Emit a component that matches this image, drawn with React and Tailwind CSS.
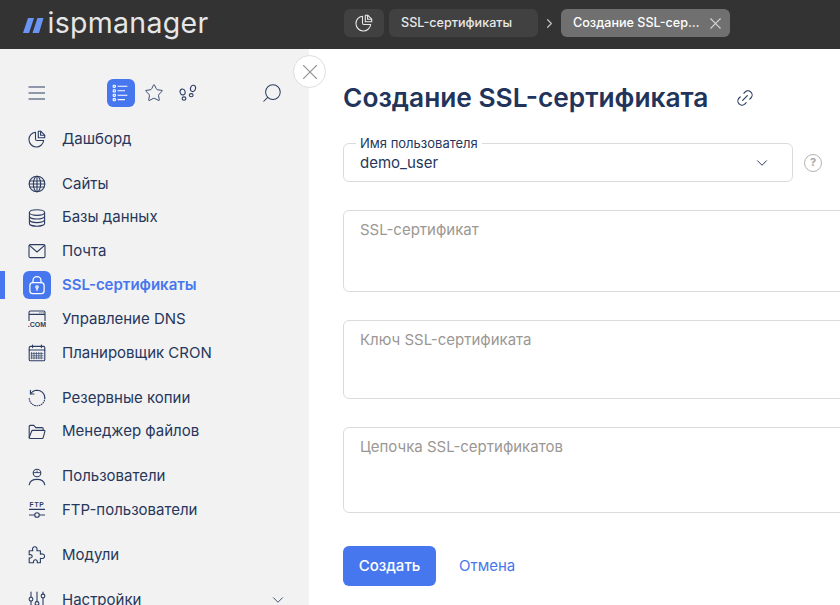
import React from 'react';
import { ChevronDown, ChevronRight, X, Search, Star, Link2 } from 'lucide-react';

const Ico = ({ children, className = 'w-[18px] h-[18px]' }) => (
  <svg viewBox="0 0 18 18" fill="none" stroke="currentColor" strokeWidth="1.1" strokeLinecap="round" strokeLinejoin="round" className={className}>
    {children}
  </svg>
);

const PieIcon = (props) => (
  <Ico {...props}>
    <path d="M7.5 2.2a7.4 7.4 0 1 0 8.2 8.3H8.9a1.4 1.4 0 0 1-1.4-1.4z" />
    <path d="M10.3 1.2h2.4l4 4v2.6h-6.4z" />
    <path d="M12.6 1.4v3.9h4" />
  </Ico>
);

const GlobeIcon = () => (
  <Ico>
    <circle cx="9" cy="9" r="7.8" />
    <ellipse cx="9" cy="9" rx="3.6" ry="7.8" />
    <path d="M9 1.2v15.6M1.9 6h14.2M1.9 12h14.2M1.2 9h15.6" />
  </Ico>
);

const DbIcon = () => (
  <Ico>
    <ellipse cx="9" cy="3.6" rx="7.6" ry="2.8" />
    <path d="M1.4 3.6v10.8c0 1.5 3.4 2.8 7.6 2.8s7.6-1.3 7.6-2.8V3.6" />
    <path d="M1.4 7.2c0 1.5 3.4 2.8 7.6 2.8s7.6-1.3 7.6-2.8M1.4 10.8c0 1.5 3.4 2.8 7.6 2.8s7.6-1.3 7.6-2.8" />
  </Ico>
);

const MailIcon = () => (
  <Ico>
    <rect x="1" y="2.6" width="16" height="13" rx="1.4" />
    <path d="M1.4 3.4 9 10l7.6-6.6" />
  </Ico>
);

const LockIcon = () => (
  <Ico className="w-[20px] h-[20px]">
    <rect x="2.6" y="6.8" width="12.8" height="10" rx="2.6" />
    <path d="M5.4 6.8V5a3.6 3.6 0 0 1 7.2 0v1.8" />
    <circle cx="9" cy="10.8" r="1.1" />
    <path d="M9 12v1.8" />
  </Ico>
);

const DnsIcon = () => (
  <svg viewBox="0 0 18 18" className="w-[18px] h-[18px]" fill="none" stroke="currentColor" strokeWidth="1.1">
    <path d="M1 11V2.4A1.4 1.4 0 0 1 2.4 1h13.2A1.4 1.4 0 0 1 17 2.4V11M1 4.4h16" />
    <path d="M11.5 2.8h.8M13.5 2.8h.8M15 2.8h.6" />
    <text x="9" y="17.4" textAnchor="middle" fontSize="7" fontWeight="700" fill="currentColor" stroke="none" fontFamily="Liberation Sans, sans-serif">.COM</text>
  </svg>
);

const CalIcon = () => (
  <Ico>
    <rect x="1.2" y="2.4" width="15.6" height="14.4" rx="1.4" />
    <path d="M1.2 6h15.6M4.6 1v2.6M13.4 1v2.6" />
    <path d="M3.6 8.4v6.4M6 8.4v6.4M8.4 8.4v6.4M10.8 8.4v6.4M13.2 8.4v6.4M3 9.6h12M3 11.8h12M3 14h12" strokeWidth="0.7" />
  </Ico>
);

const BackupIcon = () => (
  <Ico>
    <path d="M2.6 4.8A7.8 7.8 0 0 1 9 1.2a7.8 7.8 0 0 1 7.8 7.8" />
    <path d="M2.4 1.4v3.6H6" />
    <path d="M16.8 9A7.8 7.8 0 0 1 9 16.8 7.8 7.8 0 0 1 1.2 9" strokeDasharray="0.8 1.5" />
  </Ico>
);

const FolderIcon = () => (
  <Ico>
    <path d="M1.2 14.6V3.6a1.2 1.2 0 0 1 1.2-1.2h3.4l2 2.2h6.2A1.2 1.2 0 0 1 15.2 5.8V7.4" />
    <path d="M1.2 14.6 3.6 8.2a1.2 1.2 0 0 1 1.1-.8h11.4a.8.8 0 0 1 .8 1l-1.7 6.2a1.2 1.2 0 0 1-1.1.9H2.2a1 1 0 0 1-1-.9z" />
  </Ico>
);

const UserIcon = () => (
  <Ico>
    <circle cx="9" cy="5" r="3.8" />
    <path d="M5.4 4.6h7.2M9 4.6V3" strokeWidth="0.9" />
    <path d="M1.2 16.8c.6-3.4 3.8-5.4 7.8-5.4s7.2 2 7.8 5.4" />
  </Ico>
);

const FtpIcon = () => (
  <svg viewBox="0 0 18 18" className="w-[18px] h-[18px]" fill="none" stroke="currentColor" strokeWidth="1.1">
    <text x="9" y="5.6" textAnchor="middle" fontSize="6.6" fontWeight="700" letterSpacing="0.8" fill="currentColor" stroke="none" fontFamily="Liberation Sans, sans-serif">FTP</text>
    <path d="M1 8.4h16M1 14h5.6M11.4 14H17" />
    <circle cx="9" cy="14" r="2.3" />
  </svg>
);

const PuzzleIcon = () => (
  <Ico>
    <path d="M1.2 4.8h3.6c-.9-2.4.4-4 2-4s2.9 1.6 2 4h3.6v3.4c2.3-.9 4.2.3 4.2 2s-1.9 2.9-4.2 2v4.6H9.2c.6-2-.6-3-1.8-3s-2.4 1-1.8 3H1.2v-5c2 .6 3-.5 3-1.5s-1-2.1-3-1.5z" />
  </Ico>
);

const SlidersIcon = () => (
  <Ico>
    <path d="M3 1v5.4M3 10v7M9 1v9.6M9 14.4V17M15 1v2M15 7v10" />
    <circle cx="3" cy="8.2" r="1.9" />
    <circle cx="9" cy="12.5" r="1.9" />
    <circle cx="15" cy="5" r="1.9" />
  </Ico>
);

const ListIcon = () => (
  <svg viewBox="0 0 18 18" className="w-[18px] h-[18px]" fill="none" stroke="white" strokeWidth="1.1">
    <rect x="1.2" y="1.2" width="2.2" height="2.2" rx="0.6" />
    <rect x="1.2" y="5.8" width="2.2" height="2.2" rx="0.6" />
    <rect x="1.2" y="10.2" width="2.2" height="2.2" rx="0.6" />
    <rect x="1.2" y="14.6" width="2.2" height="2.2" rx="0.6" />
    <path d="M5.6 2.2h9.8M5.6 6.8h7.4M5.6 11.2h9.8M5.6 15.6h7.4" />
  </svg>
);

const StepsIcon = () => (
  <Ico>
    <ellipse cx="3.6" cy="8" rx="2.5" ry="3" transform="rotate(-15 3.6 8)" />
    <ellipse cx="5" cy="14.6" rx="1.9" ry="1.7" />
    <ellipse cx="14" cy="4.4" rx="2.5" ry="3.2" transform="rotate(15 14 4.4)" />
    <ellipse cx="12.2" cy="11.2" rx="1.9" ry="1.6" />
  </Ico>
);

const groups = [
  [{ label: 'Дашборд', icon: <PieIcon /> }],
  [
    { label: 'Сайты', icon: <GlobeIcon /> },
    { label: 'Базы данных', icon: <DbIcon /> },
    { label: 'Почта', icon: <MailIcon /> },
    { label: 'SSL-сертификаты', icon: <LockIcon />, active: true },
    { label: 'Управление DNS', icon: <DnsIcon /> },
    { label: 'Планировщик CRON', icon: <CalIcon /> },
  ],
  [
    { label: 'Резервные копии', icon: <BackupIcon /> },
    { label: 'Менеджер файлов', icon: <FolderIcon /> },
  ],
  [
    { label: 'Пользователи', icon: <UserIcon /> },
    { label: 'FTP-пользователи', icon: <FtpIcon /> },
  ],
  [{ label: 'Модули', icon: <PuzzleIcon /> }],
  [{ label: 'Настройки', icon: <SlidersIcon />, more: true }],
];

const NavRow = ({ item }) => (
  <div className="relative flex h-[33.8px] items-center pl-[23px] pr-[22px]">
    {item.active && <span className="absolute left-0 top-[3px] h-[28px] w-[5px] bg-[#4777ee]" />}
    <span className={`flex h-[28px] w-[28px] items-center justify-center rounded-[6px] ${item.active ? 'bg-[#4777ee] text-white' : 'text-[#2c3d63]'}`}>
      {item.icon}
    </span>
    <span className={`ml-[11px] text-[15px] ${item.active ? 'font-semibold text-[#4777ee]' : 'text-[#26375c]'}`}>{item.label}</span>
    {item.more && <ChevronDown className="ml-auto h-[18px] w-[18px] text-[#2c3d63]" strokeWidth={1.2} />}
  </div>
);

const TextField = ({ label, height, className = '' }) => (
  <div className={`w-[530px] rounded-[6px] border border-[#dbdbdb] px-[16px] pt-[8px] text-[15px] text-[#9b9793] ${height} ${className}`}>
    {label}
  </div>
);

export default function App() {
  return (
    <div className="flex h-[605px] w-[840px] flex-col overflow-hidden bg-white font-['Inter','Noto_Sans',sans-serif]">
      <header className="flex h-[49px] shrink-0 items-center bg-[#333333]">
        <div className="flex w-[344px] items-center pl-[23px]">
          <svg viewBox="0 0 20.5 15" className="mt-[1px] h-[15px] w-[20.5px]">
            <path d="M5 0h6L6 15H0zM14.5 0h6L16 15H9.5z" fill="#6b95f5" />
          </svg>
          <span className="ml-[4px] -mt-[2px] text-[28.5px] leading-none tracking-[0.3px] text-[#e6e6e6]">ispmanager</span>
        </div>
        <div className="-mt-[3px] flex items-center text-[12.6px]">
          <div className="flex h-[28px] w-[40px] items-center justify-center rounded-[6px] bg-[#414141] text-[#e8e8e8]">
            <PieIcon />
          </div>
          <div className="ml-[5px] flex h-[28px] w-[149px] items-center rounded-[6px] bg-[#414141] pl-[12px] font-medium text-[#e8e8e8]">SSL-сертификаты</div>
          <ChevronRight className="mx-[4px] h-[15px] w-[15px] text-[#bdbdbd]" strokeWidth={2} />
          <div className="flex h-[28px] w-[169px] items-center rounded-[6px] bg-[#707070] pl-[12px] pr-[5px] font-medium whitespace-nowrap text-white">
            Создание SSL-сер…
            <X className="ml-auto h-[19px] w-[19px] text-[#d2d2d2]" strokeWidth={1.4} />
          </div>
        </div>
      </header>

      <div className="relative flex min-h-0 flex-1">
        <aside className="flex w-[309px] shrink-0 flex-col overflow-hidden bg-[#f2f2f2]">
          <div className="mt-[30px] mb-[15px] flex h-[28px] items-center pl-[28px] pr-[26px] text-[#2c3d63]">
            <svg viewBox="0 0 18 18" className="h-[18px] w-[18px]" fill="none" stroke="currentColor" strokeWidth="1.1">
              <path d="M.5 3h16.5M.5 9h16.5M.5 15h16.5" />
            </svg>
            <div className="ml-[61px] flex h-[28px] w-[28px] items-center justify-center rounded-[6px] bg-[#4777ee]">
              <ListIcon />
            </div>
            <Star className="ml-[9px] h-[20px] w-[20px]" strokeWidth={1.1} />
            <span className="ml-[15px]"><StepsIcon /></span>
            <Search className="ml-auto h-[22px] w-[22px] -scale-x-100" strokeWidth={1.1} />
          </div>
          {groups.map((group, i) => (
            <div key={i} className="mb-[11.2px] shrink-0">
              {group.map((item) => <NavRow key={item.label} item={item} />)}
            </div>
          ))}
        </aside>

        <button className="absolute left-[293px] top-[6px] flex h-[33px] w-[33px] items-center justify-center rounded-full border border-[#dedede] bg-white text-[#9a9a9a]">
          <X className="h-[26px] w-[26px]" strokeWidth={1} />
        </button>

        <main className="min-w-0 flex-1 overflow-hidden pl-[34px] pt-[32px]">
          <div className="flex h-[34px] items-center">
            <h1 className="text-[26.3px] font-semibold leading-none whitespace-nowrap text-[#22345b]">Создание SSL-сертификата</h1>
            <Link2 className="ml-[27px] h-[20px] w-[20px] -rotate-45 text-[#22345b]" strokeWidth={1.3} />
          </div>

          <div className="mt-[28px] flex items-center">
            <div className="relative flex h-[39px] w-[450px] items-center rounded-[6px] border border-[#dbdbdb] pl-[16px] pr-[21px] pt-[1px] text-[15px] text-[#26375c]">
              <span className="absolute -top-[8px] left-[12px] bg-white px-[4px] text-[13px] leading-[15px] text-[#26375c]">Имя пользователя</span>
              demo_user
              <ChevronDown className="ml-auto h-[18px] w-[18px]" strokeWidth={1.3} />
            </div>
            <span className="ml-[11px] flex h-[18px] w-[18px] items-center justify-center rounded-full border-[1.5px] border-[#b3b3b3] text-[11px] font-bold leading-none text-[#a5a5a5]">?</span>
          </div>

          <TextField label="SSL-сертификат" height="h-[82px]" className="mt-[28px]" />
          <TextField label="Ключ SSL-сертификата" height="h-[79px]" className="mt-[28px]" />
          <TextField label="Цепочка SSL-сертификатов" height="h-[86px]" className="mt-[28px]" />

          <div className="mt-[33px] flex items-center">
            <button className="flex h-[40px] w-[93px] items-center justify-center rounded-[6px] bg-[#4777ee] text-[15px] font-medium text-white">Создать</button>
            <span className="ml-[23px] pt-[1px] text-[15px] text-[#4777ee]">Отмена</span>
          </div>
        </main>
      </div>
    </div>
  );
}
